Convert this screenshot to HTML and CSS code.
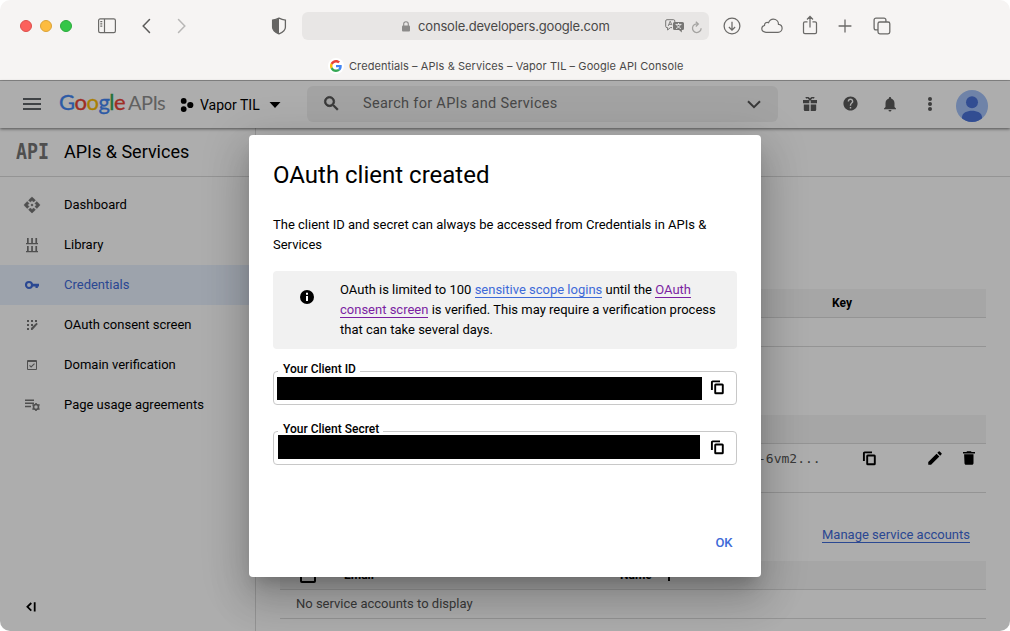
FILE: index.html
```html
<!DOCTYPE html>
<html lang="en">
<head>
<meta charset="utf-8">
<title>Credentials – APIs &amp; Services – Vapor TIL – Google API Console</title>
<link rel="stylesheet" href="styles.css">
</head>
<body>
<svg width="0" height="0" class="defs">
  <symbol id="copy" viewBox="0 0 15 15"><path d="M1.900 10V2.200a.8.8 0 0 1 .8-.8H10" fill="none" stroke="#000" stroke-width="1.900"/><rect x="5.200" y="4.500" width="7.600" height="8.800" rx=".6" fill="none" stroke="#000" stroke-width="1.900"/></symbol>
</svg>
<div class="window">
  <header class="chrome">
    <div class="toolbar">
      <div class="lights"><i class="red"></i><i class="yellow"></i><i class="green"></i></div>
      <svg class="i-side" width="18" height="16" viewBox="0 0 18 16" fill="none" stroke="#6b6a68" stroke-width="1.200"><rect x=".6" y=".9" width="16.800" height="13.800" rx="1.600"/><path d="M6.500 1v14M2.300 3.600h2M2.300 5.900h2M2.300 8.200h2"/></svg>
      <svg class="i-back" width="9" height="16" viewBox="0 0 9 16" fill="none" stroke="#5c5b5a" stroke-width="1.500" stroke-linecap="round"><path d="M7.500 1.500 1.200 8l6.300 6.500"/></svg>
      <svg class="i-fwd" width="9" height="16" viewBox="0 0 9 16" fill="none" stroke="#b8b7b6" stroke-width="1.500" stroke-linecap="round"><path d="m1.500 1.500 6.300 6.500-6.300 6.500"/></svg>
      <svg class="i-shield" width="16" height="18" viewBox="0 0 16 18"><path d="M8 1.200c2 1 4 1.600 6.400 1.900v7.200c0 3-2.400 4.900-6.400 6.600-4-1.700-6.400-3.600-6.400-6.600V3.100C4 2.800 6 2.200 8 1.200z" fill="none" stroke="#666563" stroke-width="1.300"/><path d="M8 1.200v15.700c-4-1.700-6.400-3.600-6.400-6.600V3.100C4 2.800 6 2.200 8 1.200z" fill="#666563"/></svg>
      <div class="address">
        <svg class="lock" width="8" height="11" viewBox="0 0 8 11"><rect y="4.600" width="8" height="6" rx="1" fill="#8b8a89"/><path d="M1.700 5V3c0-3 4.600-3 4.600 0v2" fill="none" stroke="#8b8a89" stroke-width="1.100"/></svg>
        <span class="url">console.developers.google.com</span>
        <svg class="i-trans" width="20" height="14" viewBox="0 0 20 14"><path d="M7 8.600H5.400L2.600 11V8.600H2A1.300 1.300 0 0 1 .7 7.300V2A1.300 1.300 0 0 1 2 .7h6.500A1.300 1.300 0 0 1 9.800 2v1" fill="none" stroke="#777674"/><path d="m3.200 7 2-4.800 1.800 4M3.900 5.400h2.500" fill="none" stroke="#777674" stroke-width=".9"/><path d="M9.500 3h8A1.500 1.500 0 0 1 19 4.500v5a1.500 1.500 0 0 1-1.500 1.500h-.7v2.400L14 11H9.500A1.500 1.500 0 0 1 8 9.500v-5A1.500 1.500 0 0 1 9.500 3z" fill="#777674"/><path d="M10.500 5.400h6M13.500 4v1.400M11.700 5.600c.6 1.800 2 3 4.300 4M15.300 5.600c-.6 1.800-2 3-4.300 4" fill="none" stroke="#eee" stroke-width=".9"/></svg>
        <svg class="i-reload" width="11" height="13" viewBox="0 0 11 13" fill="none" stroke="#a4a3a1" stroke-width="1.300"><path d="M6.500 3a4.300 4.300 0 1 0 3.600 4.200M4.800.7l2.500 2.400-2.500 2.300"/></svg>
      </div>
      <svg class="i-down" width="18" height="18" viewBox="0 0 18 18" fill="none" stroke="#6b6a68" stroke-width="1.250"><circle cx="9" cy="9" r="7.900"/><path d="M9 4.700v8.200M5.900 10 9 13.100l3.100-3.100"/></svg>
      <svg class="i-cloud" width="22" height="16" viewBox="0 0 22 16" fill="none" stroke="#6b6a68" stroke-width="1.200"><path d="M5 14.300C2.600 14.300.8 12.900.8 10.800c0-1.800 1.200-3 2.700-3.300-.2-2.400 2.200-3.800 4-2.800C8.500 2.500 10.200 1.200 12.300 1.200c3 0 5.200 2.300 5.200 5.200 2.100.2 3.600 1.800 3.600 3.900 0 2.300-1.800 4-4.100 4z"/></svg>
      <svg class="i-share" width="16" height="20" viewBox="0 0 16 20" fill="none" stroke="#6b6a68" stroke-width="1.250"><path d="M5.500 6.800H2.900c-.8 0-1.400.6-1.400 1.400v9c0 .8.6 1.400 1.400 1.400h10.200c.8 0 1.400-.6 1.400-1.400v-9c0-.8-.6-1.400-1.400-1.400h-2.600M8 12.500V1.800M5 4.500l3-3 3 3"/></svg>
      <svg class="i-plus" width="14" height="14" viewBox="0 0 14 14" stroke="#6b6a68" stroke-width="1.300"><path d="M7 .6v12.800M.6 7h12.800"/></svg>
      <svg class="i-tabs" width="18" height="18" viewBox="0 0 18 18" fill="none" stroke="#6b6a68" stroke-width="1.300"><rect x="5" y="5" width="11.800" height="11.800" rx="1.800"/><path d="M5 12.900H3a1.900 1.900 0 0 1-1.900-1.900V3A1.900 1.900 0 0 1 3 1.100h8A1.900 1.900 0 0 1 12.900 3v2"/></svg>
    </div>
    <div class="tab">
      <span class="favicon"><svg width="12" height="12" viewBox="0 0 48 48"><path fill="#EA4335" d="M24 9.500c3.540 0 6.710 1.220 9.210 3.600l6.850-6.850C35.900 2.380 30.470 0 24 0 14.620 0 6.510 5.380 2.560 13.220l7.980 6.190C12.430 13.720 17.740 9.500 24 9.500z"/><path fill="#4285F4" d="M46.980 24.550c0-1.570-.15-3.090-.38-4.550H24v9.020h12.940c-.58 2.960-2.260 5.480-4.780 7.180l7.730 6c4.510-4.180 7.090-10.360 7.090-17.650z"/><path fill="#FBBC05" d="M10.530 28.590c-.48-1.450-.76-2.990-.76-4.590s.27-3.140.76-4.590l-7.980-6.190C.92 16.460 0 20.120 0 24c0 3.880.92 7.540 2.560 10.780l7.970-6.190z"/><path fill="#34A853" d="M24 48c6.480 0 11.930-2.130 15.890-5.810l-7.730-6c-2.150 1.450-4.920 2.300-8.160 2.300-6.260 0-11.570-4.220-13.470-9.910l-7.980 6.190C6.510 42.620 14.620 48 24 48z"/></svg></span>
      <span class="tab-title">Credentials – APIs &amp; Services – Vapor TIL – Google API Console</span>
    </div>
  </header>

  <div class="app">
    <div class="topbar">
      <svg class="menu" width="18" height="12" viewBox="0 0 18 12"><path fill="#5f6368" d="M0 0h18v2H0zM0 5h18v2H0zM0 10h18v2H0z"/></svg>
      <div class="logo"><b class="cb">G</b><b class="cr">o</b><b class="cy">o</b><b class="cb">g</b><b class="cg">l</b><b class="cr">e</b><span class="apis">APIs</span></div>
      <div class="project">
        <svg width="14" height="14" viewBox="0 0 14 14"><circle cx="3.700" cy="2.900" r="2.900"/><circle cx="3.700" cy="11.100" r="2.900"/><circle cx="10.300" cy="7" r="3.100"/></svg>
        <span>Vapor TIL</span>
        <svg width="12" height="6" viewBox="0 0 12 6"><path d="M.5 0h11L6 6z"/></svg>
      </div>
      <div class="search">
        <svg width="19" height="19" viewBox="0 0 24 24" fill="#555"><path stroke="#555" d="M15.500 14h-.79l-.28-.27A6.470 6.470 0 0 0 16 9.500 6.500 6.500 0 1 0 9.500 16c1.610 0 3.090-.59 4.230-1.570l.27.28v.79l5 4.990L20.490 19l-4.990-5zm-6 0C7.010 14 5 11.990 5 9.500S7.010 5 9.500 5 14 7.010 14 9.500 11.990 14 9.500 14z"/></svg>
        <span>Search for APIs and Services</span>
        <svg class="chev" width="14" height="9" viewBox="0 0 14 9" fill="none" stroke="#555" stroke-width="2"><path d="m1 1.200 6 6 6-6"/></svg>
      </div>
      <svg class="i-gift" width="14" height="14" viewBox="0 0 14 14" fill="#5a5a5a"><path d="M0 3h6.300v3.300H0zM7.700 3H14v3.300H7.700zM.8 7.400h5.500V14H2a1.200 1.200 0 0 1-1.200-1.200zM7.700 7.400h5.500v5.400A1.200 1.200 0 0 1 12 14H7.700z"/><path d="M7 3.200C6 .6 4.200-.2 2.900 1.200M7 3.200c1-2.600 2.800-3.400 4.100-2" fill="none" stroke="#5a5a5a" stroke-width="1.600"/></svg>
      <svg class="i-help" width="17" height="17" viewBox="0 0 24 24" fill="#5a5a5a"><path d="M12 2C6.480 2 2 6.480 2 12s4.480 10 10 10 10-4.480 10-10S17.520 2 12 2zm1 17h-2v-2h2v2zm2.070-7.750-.9.920C13.450 12.900 13 13.500 13 15h-2v-.5c0-1.100.45-2.100 1.170-2.830l1.240-1.260c.37-.36.59-.86.59-1.410 0-1.100-.9-2-2-2s-2 .9-2 2H8c0-2.210 1.790-4 4-4s4 1.790 4 4c0 .88-.36 1.680-.93 2.250z"/></svg>
      <svg class="i-bell" width="18" height="18" viewBox="0 0 24 24" fill="#5a5a5a"><path d="M12 22c1.100 0 2-.9 2-2h-4a2 2 0 0 0 2 2zm6-6v-5c0-3.070-1.640-5.640-4.500-6.320V4c0-.83-.67-1.500-1.500-1.500s-1.500.67-1.500 1.500v.68C7.630 5.360 6 7.920 6 11v5l-2 2v1h16v-1l-2-2z"/></svg>
      <svg class="i-more" width="6" height="14" viewBox="0 0 6 14" fill="#5a5a5a"><circle cx="3" cy="2" r="2"/><circle cx="3" cy="7" r="2"/><circle cx="3" cy="12" r="2"/></svg>
      <svg class="avatar" width="32" height="32" viewBox="0 0 32 32"><defs><clipPath id="av"><circle cx="16" cy="16" r="16"/></clipPath></defs><g clip-path="url(#av)"><path fill="#a4c2f8" d="M0 0h32v32H0z"/><circle cx="16" cy="12.300" r="6" fill="#4a72d8"/><path fill="#4a72d8" d="M6 32v-5c0-8.500 20-8.500 20 0v5z"/></g></svg>
    </div>
    <div class="body">
      <nav class="sidebar">
        <div class="side-head"><span class="api-mark">API</span><span>APIs &amp; Services</span></div>
        <div class="items">
          <a><svg width="18" height="18" viewBox="0 0 24 24"><path d="m14 12-2 2-2-2 2-2z"/><path stroke="currentColor" stroke-width=".6" stroke-linejoin="round" d="m12 6 2.120 2.120 2.500-2.500L13 2q-1-1-2 0L7.380 5.620l2.500 2.500zM6 12l2.120-2.120-2.500-2.500L2 11q-1 1 0 2l3.620 3.620 2.500-2.500zM18 12l-2.120 2.120 2.500 2.500L22 13q1-1 0-2l-3.620-3.620-2.500 2.500zM12 18l-2.120-2.120-2.500 2.500L11 22q1 1 2 0l3.620-3.620-2.500-2.500z"/></svg><span>Dashboard</span></a>
          <a><svg width="18" height="18" viewBox="0 0 18 18"><path d="M3 7h12v1.300H3zM4 2h1.700v5H4zM8.200 2h1.700v5H8.200zM12.400 2h1.700v5h-1.700zM3 15h12v1.300H3zM4 10h1.700v5H4zM8.200 10h1.700v5H8.200zM12.400 10h1.700v5h-1.700z"/></svg><span>Library</span></a>
          <a class="active"><svg width="18" height="18" viewBox="0 0 18 18"><circle cx="6" cy="9" r="3" fill="none" stroke="currentColor" stroke-width="2.100"/><path d="M9 7.800h7v2.600h-1.200V12h-2.300v-1.600H9z"/></svg><span>Credentials</span></a>
          <a><svg width="18" height="18" viewBox="0 0 18 18"><path d="M4 4h2v2H4zM8 4h2v2H8zM12 4h2v2h-2zM4 8h2v2H4zM8 8h2v2H8zM4 12h2v2H4zM8 14v-2l5.500-5.300 1.300 1.300L9.400 14z"/></svg><span>OAuth consent screen</span></a>
          <a><svg width="18" height="18" viewBox="0 0 18 18"><path fill-rule="evenodd" d="M5 4h8a1 1 0 0 1 1 1v8a1 1 0 0 1-1 1H5a1 1 0 0 1-1-1V5a1 1 0 0 1 1-1zm0 2v7h8V6z"/><path d="m6.500 9.400 1.600 1.600L11.500 7.700" fill="none" stroke="currentColor" stroke-width="1.100"/></svg><span>Domain verification</span></a>
          <a><svg width="18" height="18" viewBox="0 0 18 18"><path d="M2 3.500h9V5H2zM2 6.600h9v1.500H2zM2 9.700h6v1.500H2z"/><circle cx="13" cy="11" r="2.500" fill="none" stroke="currentColor" stroke-width="1.600"/><path d="M12.200 7h1.600v1.800h-1.600zM12.200 13.200h1.600V15h-1.600zM9 9.200l.8-1.300 1.500.9-.8 1.300zM14.700 13.200l.8-1.300 1.500.9-.8 1.300zM9 12.800l1.500-.9.8 1.300-1.500.9zM14.700 8.800l1.500-.9.8 1.300-1.500.9z"/></svg><span>Page usage agreements</span></a>
        </div>
        <svg class="collapse" width="10" height="10" viewBox="0 0 10 10" fill="none" stroke="#000" stroke-width="1.800"><path d="M5.300 1 1.400 4.800l3.900 3.800M8.700.2v9.300"/></svg>
      </nav>
      <main>
        <div class="page-head"></div>
        <div class="content">
          <div class="row head keys"><span>Key</span></div>
          <div class="row"></div>
          <div class="row head clients"></div>
          <div class="row client">
            <span class="client-id">-6vm2...</span>
            <svg class="c-copy" width="15" height="15"><use href="#copy"/></svg>
            <svg class="c-edit" width="18" height="18" viewBox="0 0 24 24"><path d="M3 17.250V21h3.750L17.810 9.940l-3.750-3.750zM20.710 7.040a1 1 0 0 0 0-1.410l-2.340-2.340a1 1 0 0 0-1.410 0l-1.830 1.830 3.750 3.750z"/></svg>
            <svg class="c-del" width="18" height="18" viewBox="0 0 24 24"><path d="M6 19c0 1.100.9 2 2 2h8c1.100 0 2-.9 2-2V7H5.500L6 19zM20 4h-4.500l-1-1h-5l-1 1H4v2h16z"/></svg>
          </div>
          <div class="manage"><a>Manage service accounts</a></div>
          <div class="row head accounts"><i class="box"></i><span class="email">Email</span><span class="name">Name</span><svg width="12" height="12" viewBox="0 0 12 12" fill="none" stroke="#000" stroke-width="2"><path d="M6 12V1M1 6l5-5 5 5"/></svg></div>
          <div class="row none">No service accounts to display</div>
        </div>
      </main>
    </div>
    <div class="scrim"></div>
    <section class="dialog">
      <h1>OAuth client created</h1>
      <p class="lead">The client ID and secret can always be accessed from Credentials in APIs &amp;<br>Services</p>
      <div class="info">
        <svg width="16" height="16" viewBox="0 0 16 16"><circle cx="8" cy="8" r="7"/><path fill="#fff" d="M7 3.800h2v2H7zM7 7h2v5H7z"/></svg>
        <p>OAuth is limited to 100 <a>sensitive scope logins</a> until the <a class="seen">OAuth</a><br><a class="seen">consent screen</a> is verified. This may require a verification process<br>that can take several days.</p>
      </div>
      <div class="field"><label>Your Client ID</label><i class="redact id"></i><svg width="15" height="15"><use href="#copy"/></svg></div>
      <div class="field"><label>Your Client Secret</label><i class="redact secret"></i><svg width="15" height="15"><use href="#copy"/></svg></div>
      <button>OK</button>
    </section>
  </div>
</div>
</body>
</html>
```
FILE: styles.css
```css
* { box-sizing: border-box; }
body { margin: 0; background: #fff; font-family: Roboto, sans-serif; font-size: 13px; color: #000; }
p, h1 { margin: 0; font-weight: 400; }
svg { display: block; flex: none; }
i, b { font-style: normal; font-weight: 400; }
.defs { position: absolute; }
.window { width: 1010px; height: 631px; border-radius: 10px; overflow: hidden; display: flex; flex-direction: column; background: #fff; }

/* browser chrome */
.chrome { height: 81px; flex: none; background: #f6f4f3; border-bottom: 1px solid #8b8b8b; font-family: Inter, sans-serif; color: #4a4948; }
.toolbar { height: 52px; display: flex; align-items: center; padding-left: 20px; }
.lights { display: flex; gap: 8px; }
.lights i { width: 12px; height: 12px; border-radius: 50%; }
.red { background: #fc605c; border: 1px solid #dd4f4b; }
.yellow { background: #fdbc40; border: 1px solid #dba338; }
.green { background: #34c648; border: 1px solid #2bab3c; }
.i-side { margin-left: 26px; }
.i-back { margin-left: 26px; }
.i-fwd { margin-left: 26px; }
.i-shield { margin-left: 85px; }
.address { width: 407px; height: 28px; margin-left: 15px; border-radius: 6px; background: #e8e6e5; display: flex; align-items: center; padding-left: 100px; }
.url { margin-left: 8px; width: 193px; font-size: 13px; letter-spacing: -.17px; white-space: nowrap; }
.lock { margin-top: 1px; }
.i-trans { margin-left: 54px; }
.i-reload { margin-left: 6px; margin-top: 2px; }
.i-down { margin-left: 14px; }
.i-cloud { margin-left: 20px; }
.i-share { margin-left: 19px; margin-bottom: 3px; }
.i-plus { margin-left: 20px; }
.i-tabs { margin-left: 21px; }
.tab { height: 28px; display: flex; align-items: center; padding-left: 328px; gap: 5px; }
.favicon { width: 16px; height: 16px; border-radius: 50%; background: #fff; display: grid; place-items: center; }
.tab-title { font-size: 11px; letter-spacing: .08px; white-space: nowrap; }

/* console */
.app { position: relative; flex: 1; display: flex; flex-direction: column; }
.topbar { height: 47px; flex: none; display: flex; align-items: center; padding: 0 0 2px 23px; box-shadow: 0 1px 3px rgba(0,0,0,.55); z-index: 1; }
.logo { display: flex; align-items: baseline; width: 106px; margin: -3px 0 0 18px; font: 22px/26px Lato, sans-serif; letter-spacing: -.55px; }
.logo b { font-weight: 400; -webkit-text-stroke: .35px; }
.cb { color: #4285f4; } .cr { color: #ea4335; } .cy { color: #fbbc05; } .cg { color: #34a853; }
.apis { margin-left: 3px; color: #8f8f8f; font-size: 20px; letter-spacing: -.6px; }
.project { display: flex; align-items: center; width: 101px; margin-left: 15px; font-size: 14px; padding-top: 2px; }
.project span { margin: 0 9px 0 6px; white-space: nowrap; }
.search { width: 471px; height: 36px; margin: 1px 0 0 26px; border-radius: 6px; background: #f1f1f1; display: flex; align-items: center; padding: 0 0 2px 15px; color: #6b6b6b; font-size: 14.500px; letter-spacing: .31px; }
.search span { margin-left: 22px; }
.chev { margin: 2px 17px 0 auto; }
.i-gift { margin-left: 25px; }
.i-help { margin-left: 25px; }
.i-bell { margin-left: 22px; }
.i-more { margin-left: 28px; }
.avatar { margin-left: 23px; margin-top: 5px; }
.body { flex: 1; display: flex; }
.sidebar { width: 256px; border-right: 1px solid #dadada; display: flex; flex-direction: column; }
.side-head { height: 49px; display: flex; align-items: center; padding-bottom: 2px; border-bottom: 1px solid #dadada; font-size: 18px; }
.api-mark { width: 48px; margin-left: 16px; padding-top: 2px; font: 700 22px/1 "DejaVu Sans Mono", monospace; color: #757575; transform: scaleX(.83); transform-origin: 0 0; }
.items { padding-top: 8px; }
.items a { height: 40px; display: flex; align-items: center; padding: 0 0 1px 23px; }
.items span { margin-top: -1px; }
.items svg { fill: #757575; color: #757575; margin-right: 23px; }
.items .active { color: #3e6ad8; background: #e8f0fe; }
.items .active svg { fill: #3e6ad8; color: #3e6ad8; }
.collapse { margin: auto 0 19px 26px; }
main { flex: 1; display: flex; flex-direction: column; }
.page-head { height: 49px; border-bottom: 1px solid #dadada; }
.content { padding: 112px 24px 0; display: flex; flex-direction: column; }
.row { height: 29px; border-bottom: 1px solid #dadada; display: flex; align-items: center; }
.head { background: #f5f5f5; font-weight: 700; font-size: 12px; }
.keys { padding-left: 552px; }
.clients { margin-top: 68px; }
.client { height: 49px; align-items: flex-start; padding: 6px 0 0 478px; }
.client-id { width: 104px; font: 13px/17px "DejaVu Sans Mono", monospace; color: #555; }
.c-copy { margin-top: 1px; }
.c-edit { margin: -1px 0 0 49px; }
.c-del { margin: -1px 0 0 16px; }
.manage { height: 68px; display: flex; justify-content: flex-end; align-items: center; padding: 16px 16px 0 0; }
.manage a, .info a { color: #3e6ad8; border-bottom: 1px solid #3e6ad8; }
.accounts { padding-left: 20px; }
.box { width: 16px; height: 16px; border: 2px solid #000; border-radius: 2px; }
.email { width: 276px; margin-left: 28px; }
.name { margin-right: 11px; }
.none { padding: 0 0 2px 16px; color: #555; }
.scrim { position: absolute; inset: 0; background: rgba(0,0,0,.32); z-index: 2; }

/* dialog */
.dialog { position: absolute; z-index: 3; left: 249px; top: 54px; width: 512px; height: 442px; padding: 24px; border-radius: 4px; background: #fff; display: flex; flex-direction: column; box-shadow: 0 11px 15px -7px rgba(0,0,0,.2), 0 24px 38px 3px rgba(0,0,0,.14), 0 9px 46px 8px rgba(0,0,0,.12); }
h1 { font-size: 24px; line-height: 32px; }
.lead { margin-top: 24px; line-height: 20px; white-space: nowrap; }
.info { margin-top: 16px; height: 78px; border-radius: 4px; background: #f1f1f1; display: flex; padding: 9px 0 0 26px; }
.info svg { margin: 9px 25px 0 0; }
.info p { line-height: 20px; white-space: nowrap; }
.info a.seen { color: #7b1fa2; border-color: #7b1fa2; }
.field { position: relative; height: 34px; margin-top: 22px; border: 1px solid #c8c8c8; border-radius: 4px; display: flex; align-items: center; justify-content: space-between; padding-right: 11px; }
.field + .field { margin-top: 26px; }
.field svg { margin-top: -2px; }
.field label { position: absolute; left: 4px; top: -10px; padding: 0 4px 0 5px; background: #fff; font-size: 12px; line-height: 14px; font-weight: 500; white-space: nowrap; }
.redact { background: #000; z-index: 1; }
.id { width: 425px; height: 23px; margin-left: 3px; }
.secret { width: 422px; height: 24px; margin: -3px 0 0 4px; }
button { margin: auto 0 0 auto; padding: 0; border: 0; background: none; font: 500 13px/20px Roboto, sans-serif; color: #3e6ad8; width: 26px; text-align: center; }
```
